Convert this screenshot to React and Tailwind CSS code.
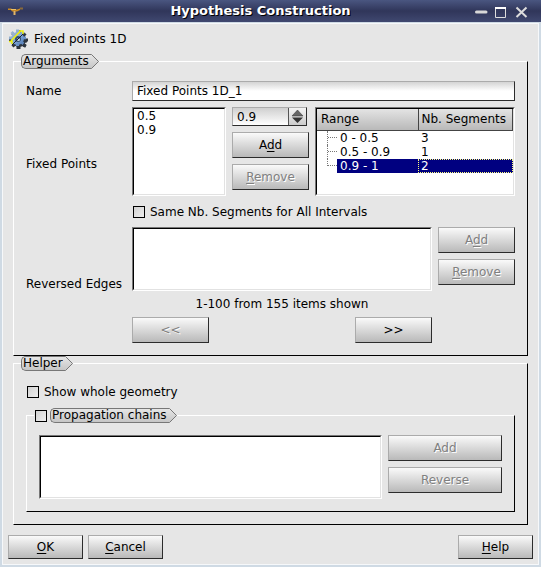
import { useId } from "react";

function Key({ children }) {
  return <span className="underline decoration-1 underline-offset-2">{children}</span>;
}

function PushButton({ className = "h-[26px]", disabled = false, children }) {
  return (
    <button
      type="button"
      disabled={disabled}
      className={`shrink-0 border border-t-[#ababab] border-l-[#ababab] border-r-[#2c2c2c] border-b-[#2c2c2c] bg-linear-to-b from-[#fafafa] to-[#b9b9b9] text-center leading-[22px] disabled:text-[#808080] disabled:[text-shadow:1px_1px_0_#fff] ${className}`}
    >
      {children}
    </button>
  );
}

function Tag({ children }) {
  return (
    <span className="flex h-[15px] text-black">
      <span className="block h-[15px] rounded-l-[5px] border-y border-l border-[#777] bg-linear-to-b from-[#e6e6e6] to-[#c6c6c6] pl-px leading-[13px]">
        {children}
      </span>
      <svg width="10" height="15" viewBox="0 0 10 15" className="block">
        <defs>
          <linearGradient id="tip" x1="0" y1="0" x2="0" y2="1">
            <stop offset="0" stopColor="#e6e6e6" />
            <stop offset="1" stopColor="#c6c6c6" />
          </linearGradient>
        </defs>
        <path d="M0 .5H2.5L9.5 7.5L2.5 14.5H0" fill="url(#tip)" stroke="#777" />
      </svg>
    </span>
  );
}

function CheckBox({ id }) {
  return (
    <input
      id={id}
      type="checkbox"
      className="ml-px size-3 shrink-0 appearance-none border border-black bg-linear-to-br from-[#d2d2d2] to-[#eeeeee]"
    />
  );
}

function Sunken({ className = "", children }) {
  return (
    <div className={`border border-t-[#777] border-l-[#777] border-r-white border-b-white ${className}`}>
      <div className="h-full border border-t-black border-l-black border-r-[#e2e2e2] border-b-[#e2e2e2] bg-white">
        {children}
      </div>
    </div>
  );
}

const ranges = [
  ["0 - 0.5", "3"],
  ["0.5 - 0.9", "1"],
  ["0.9 - 1", "2"],
];

function RangeTable() {
  return (
    <table className="w-full table-fixed border-collapse text-left">
      <colgroup>
        <col className="w-[101px]" />
        <col />
      </colgroup>
      <thead>
        <tr className="h-[21px] bg-linear-to-b from-[#e4e4e4] to-[#b9b9b9]">
          <th className="border-r border-b border-[#444] p-0 pl-1 font-normal">Range</th>
          <th className="border-r border-b border-l border-r-[#444] border-b-[#444] border-l-[#f4f4f4] p-0 pl-[3px] font-normal whitespace-nowrap">
            Nb. Segments
          </th>
        </tr>
      </thead>
      <tbody>
        {ranges.map(([range, count], i) => {
          const last = i === ranges.length - 1;
          return (
            <tr key={range} className="h-[14px] leading-[14px]">
              <td className="p-0">
                <div className="flex h-[14px] pl-[10px]">
                  <span className={`block w-0 border-l border-dotted border-[#777] ${last ? "h-[7px]" : "h-[14px]"}`} />
                  <span className="block h-[7px] w-[9px] border-b border-dotted border-[#777]" />
                  <span className={`block grow pl-[3px] ${last ? "bg-[#000080] text-white" : ""}`}>{range}</span>
                </div>
              </td>
              <td className="p-0">
                <div
                  className={`h-[14px] pl-[3px] ${last ? "bg-[#000080] text-white outline-1 -outline-offset-1 outline-dotted outline-[#ffff7f]" : ""}`}
                >
                  {count}
                </div>
              </td>
            </tr>
          );
        })}
      </tbody>
    </table>
  );
}

function TitleBar() {
  return (
    <header className="flex h-[22px] items-center bg-linear-to-b from-[#4a5680] via-[#30365a] via-50% to-[#404870] pr-3 pl-2 text-white">
      <svg width="16" height="16" viewBox="0 0 16 16" className="block">
        <path d="M0 5.5H3L5 6.5H9L12 5.5V7L9 8.500H4L3 7H0Z" fill="#c98a25" />
        <path d="M3 6.5H8" stroke="#f0c060" />
        <path d="M6.5 8V12" stroke="#e0b468" strokeWidth="2" />
        <path d="M12 5.5H15" stroke="#8a6a3a" strokeWidth="2" />
      </svg>
      <h1 className="grow pl-6 text-center text-[13px] font-bold [text-shadow:1px_1px_0_#000]">Hypothesis Construction</h1>
      <div className="flex items-center gap-1">
        <button type="button" aria-label="Minimize" className="size-4">
          <svg width="16" height="16" viewBox="0 0 16 16">
            <path d="M3.5 9H13" stroke="#d8d8d8" strokeWidth="3" strokeLinecap="round" />
          </svg>
        </button>
        <button type="button" aria-label="Maximize" className="size-4">
          <svg width="16" height="16" viewBox="0 0 16 16">
            <path d="M2.5 5V14.5H12.5V5" fill="none" stroke="#ddd" />
            <path d="M2 5H13" stroke="#fff" strokeWidth="2" />
          </svg>
        </button>
        <button type="button" aria-label="Close" className="size-4">
          <svg width="16" height="16" viewBox="0 0 16 16">
            <path d="M3.500 4.500L13.500 14M13.500 4.500L3.500 14" stroke="#ddd" strokeWidth="2" />
          </svg>
        </button>
      </div>
    </header>
  );
}

function GearIcon() {
  return (
    <svg width="20" height="20" viewBox="0 0 20 20" className="block">
      <defs>
        <linearGradient id="gear" x1="0" y1="0" x2="1" y2="1">
          <stop offset="0" stopColor="#a9bccb" />
          <stop offset="0.55" stopColor="#7ba3d8" />
          <stop offset="1" stopColor="#4d75ad" />
        </linearGradient>
      </defs>
      <g fill="#2d353f">
        <circle cx="11" cy="11" r="7" />
        <path d="M11 1V20M1 11H20M4.500 4.500L17.500 17.500M17.500 4.500L4.500 17.500" stroke="#2d353f" strokeWidth="3" />
      </g>
      <path
        d="M9.500 0.500V17.500M1 9H18M3.500 3L15.500 15M15.500 3L3.500 15"
        stroke="url(#gear)"
        strokeWidth="3"
      />
      <path d="M16 12L19 12M15 16L18 17M10 17V20" stroke="#2d353f" strokeWidth="3" />
      <circle cx="9.500" cy="9.500" r="6.500" fill="url(#gear)" />
      <circle cx="10" cy="10" r="3" fill="#35506f" />
      <circle cx="10.500" cy="10.500" r="1.500" fill="#c9d4dd" />
      <path d="M4 16L16 4" stroke="#1c2530" />
      <path d="M3 12L12 2.500" stroke="#f2f20a" strokeWidth="1.500" />
      <path d="M1 12.500H4V15M11 2H15V5" fill="none" stroke="#f2f20a" strokeWidth="1.500" />
    </svg>
  );
}

const groupFrame = "min-w-0 border border-t-white border-l-white border-r-black border-b-black";

export default function App() {
  const id = useId();
  return (
    <main className="bg-[#e6e6e6] font-['DejaVu_Sans',sans-serif] text-[12px] leading-[14px] text-black">
      <TitleBar />
      <div className="border-x-2 border-t border-b-2 border-[#cfdae4]">
        <div className="border border-[#f6f8fa] p-[5px]">
          <div className="flex h-5 items-center gap-[6px]">
            <GearIcon />
            <span>Fixed points 1D</span>
          </div>

          <div className="px-[5px] pt-[5px]">
            <fieldset className={`${groupFrame} px-3 pb-3`}>
              <legend className="-ml-[5px]">
                <Tag>Arguments</Tag>
              </legend>
              <div className="grid grid-cols-[100px_minmax(0,1fr)] gap-[6px] pt-3">
                <label htmlFor={`${id}n`} className="self-center">
                  Name
                </label>
                <input
                  id={`${id}n`}
                  defaultValue="Fixed Points 1D_1"
                  className="h-5 w-full min-w-0 border border-t-[#ababab] border-l-[#ababab] border-r-[#2c2c2c] border-b-[#2c2c2c] bg-linear-to-b from-[#d4d4d4] to-white to-50% px-1"
                />

                <span className="self-center pt-6">Fixed Points</span>
                <div className="flex h-[89px] gap-[6px]">
                  <Sunken className="min-w-0 grow">
                    <ul className="pl-[3px]">
                      <li>0.5</li>
                      <li>0.9</li>
                    </ul>
                  </Sunken>
                  <div className="flex w-[77px] shrink-0 flex-col gap-[6px]">
                    <div className="flex h-[19px] w-[75px] border border-t-[#ababab] border-l-[#ababab] border-r-[#2c2c2c] border-b-[#2c2c2c] bg-white">
                      <input
                        aria-label="Fixed point value"
                        defaultValue="0.9"
                        className="w-0 min-w-0 grow bg-linear-to-b from-[#d0d0d0] to-white px-1"
                      />
                      <button
                        type="button"
                        aria-label="Step value"
                        className="w-[18px] border-l border-[#555] bg-linear-to-b from-[#f4f4f4] to-[#cccccc]"
                      >
                        <svg width="17" height="17" viewBox="0 0 17 17">
                          <path d="M3 8L8.500 2L14 8Z" fill="#666" stroke="#333" strokeWidth="0.500" />
                          <path d="M3 9.500L8.500 15L14 9.500Z" fill="#333" />
                        </svg>
                      </button>
                    </div>
                    <PushButton>
                      A<Key>d</Key>d
                    </PushButton>
                    <PushButton disabled>
                      <Key>R</Key>emove
                    </PushButton>
                  </div>
                  <Sunken className="w-[200px] shrink-0">
                    <RangeTable />
                  </Sunken>
                </div>

                <label className="col-start-2 flex h-[19px] items-center gap-[5px]">
                  <CheckBox />
                  <span>Same Nb. Segments for All Intervals</span>
                </label>

                <span className="self-end">Reversed Edges</span>
                <div className="flex gap-[6px]">
                  <Sunken className="h-16 grow" />
                  <div className="flex w-[77px] flex-col gap-[6px]">
                    <PushButton disabled>
                      A<Key>d</Key>d
                    </PushButton>
                    <PushButton disabled>
                      <Key>R</Key>emove
                    </PushButton>
                  </div>
                </div>

                <div className="col-start-2 mr-[83px]">
                  <p className="text-center">1-100 from 155 items shown</p>
                  <div className="flex justify-between pt-[6px]">
                    <PushButton disabled className="h-[26px] w-[77px]">
                      &lt;&lt;
                    </PushButton>
                    <PushButton className="h-[26px] w-[77px]">&gt;&gt;</PushButton>
                  </div>
                </div>
              </div>
            </fieldset>

            <fieldset className={`${groupFrame} px-3 pb-3`}>
              <legend className="-ml-[5px]">
                <Tag>Helper</Tag>
              </legend>
              <label className="flex items-center gap-[5px] pt-[14px]">
                <CheckBox />
                <span>Show whole geometry</span>
              </label>
              <fieldset className={`${groupFrame} mt-[9px] px-3 pb-3`}>
                <legend className="-ml-[5px] flex items-center gap-[3px]">
                  <CheckBox id={`${id}p`} />
                  <label htmlFor={`${id}p`}>
                    <Tag>Propagation chains</Tag>
                  </label>
                </legend>
                <div className="flex gap-[6px] pt-3">
                  <Sunken className="h-16 grow" />
                  <div className="flex w-[114px] flex-col gap-[6px]">
                    <PushButton disabled>Add</PushButton>
                    <PushButton disabled>Reverse</PushButton>
                  </div>
                </div>
              </fieldset>
            </fieldset>
          </div>

          <footer className="flex gap-[5px] pt-[10px]">
            <PushButton className="h-6 w-[75px]">
              <Key>O</Key>K
            </PushButton>
            <PushButton className="h-6 w-[75px]">
              <Key>C</Key>ancel
            </PushButton>
            <PushButton className="ml-auto h-6 w-[75px]">
              <Key>H</Key>elp
            </PushButton>
          </footer>
        </div>
      </div>
    </main>
  );
}
